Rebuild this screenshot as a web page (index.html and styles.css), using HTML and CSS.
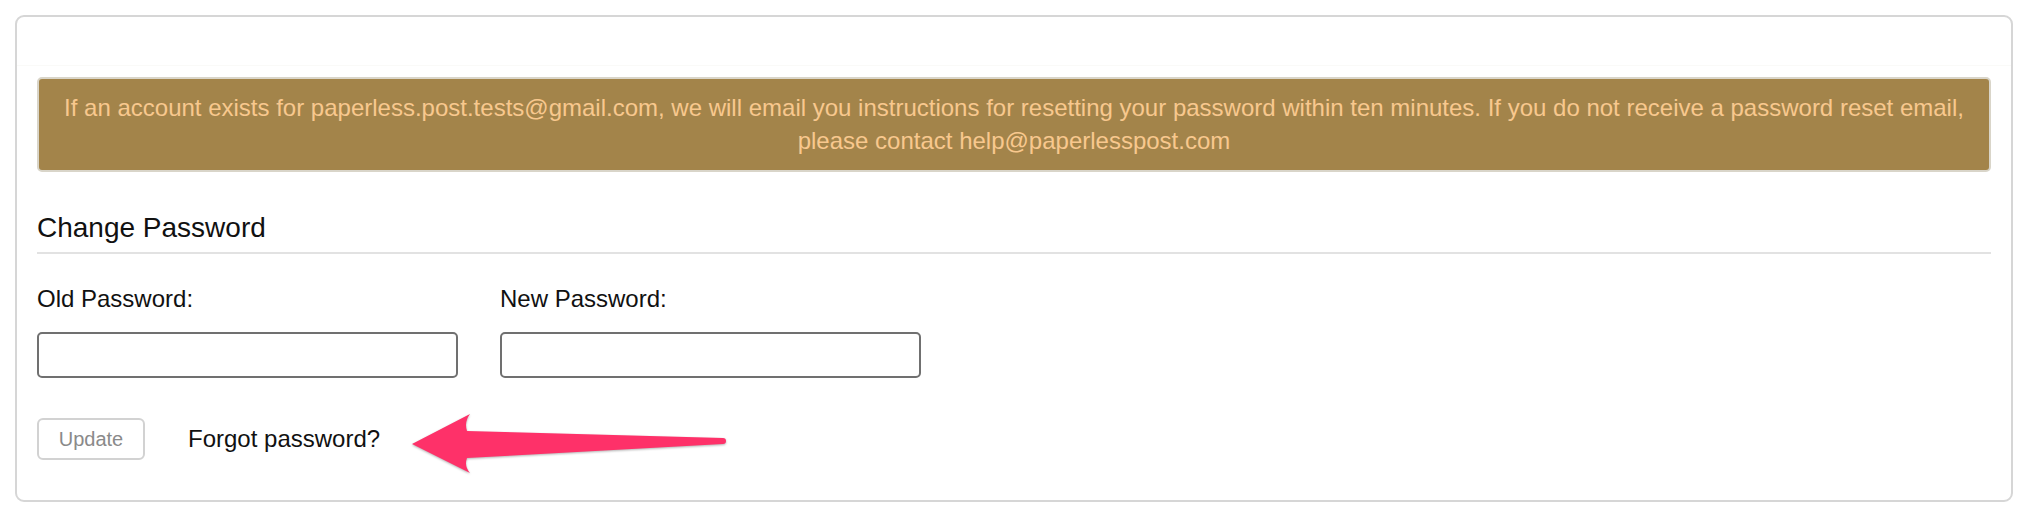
FILE: index.html
```html
<!DOCTYPE html>
<html lang="en">
<head>
  <meta charset="UTF-8">
  <title>Account Settings</title>
  <link rel="stylesheet" href="styles.css">
</head>
<body class="settings-page">
  <div class="card">
    <div class="card-top"></div>

    <div class="notice">
      If an account exists for paperless.post.tests@gmail.com, we will email you instructions for resetting your password within ten minutes. If you do not receive a password reset email, please contact help@paperlesspost.com
    </div>

    <h2 class="section-title">Change Password</h2>

    <div class="fields">
      <div class="field">
        <label for="oldPw">Old Password:</label>
        <input type="password" id="oldPw">
      </div>
      <div class="field">
        <label for="newPw">New Password:</label>
        <input type="password" id="newPw">
      </div>
    </div>

    <div class="actions">
      <button class="update-btn" disabled>Update</button>
      <a href="#" class="forgot-link">Forgot password?</a>
      <!-- annotation arrow -->
      <svg class="arrow" width="330" height="75" viewBox="0 0 330 75">
        <path d="M10 42 L68 12 Q62 20 65 29 L321 36 A3 3 0 0 1 321 42 L65 56 Q62 64 68 71 Z" fill="#fe3169"/>
      </svg>
    </div>
  </div>
</body>
</html>
```

FILE: styles.css
```css
body.settings-page {
  margin: 0;
  padding: 15px;
  background: #ffffff;
  font-family: "Liberation Sans", Arial, Helvetica, sans-serif;
  color: #111111;
}

.card {
  width: 1998px;
  box-sizing: border-box;
  border: 2px solid #d6d6d6;
  border-radius: 9px;
  padding: 0 20px 40px 20px;
}

.card-top {
  height: 48px;
  border-bottom: 1px solid #fafaf8;
  margin: 0 -20px 11px -20px;
}

.notice {
  background: #a3844a;
  color: #f8c88e;
  border: 2px solid #d9d5c9;
  border-radius: 5px;
  padding: 12px 15px 13px 15px;
  font-size: 24px;
  line-height: 33px;
  text-align: center;
}

.section-title {
  font-size: 28px;
  font-weight: normal;
  line-height: 34px;
  margin: 39px 0 0 0;
  padding-bottom: 7px;
  border-bottom: 2px solid #e2e2e2;
}

.fields {
  display: flex;
  gap: 42px;
  margin-top: 31px;
}

.field {
  display: flex;
  flex-direction: column;
  width: 421px;
}

.field label {
  font-size: 24px;
  line-height: 28px;
  margin-bottom: 19px;
}

.field input {
  height: 46px;
  box-sizing: border-box;
  border: 2px solid #707070;
  border-radius: 5px;
  font-size: 20px;
  padding: 0 10px;
}

.actions {
  display: flex;
  align-items: center;
  margin-top: 40px;
}

.update-btn {
  width: 108px;
  height: 42px;
  background: #ffffff;
  border: 2px solid #d2d2d2;
  border-radius: 6px;
  color: #8a8a8a;
  font-family: "Liberation Sans", Arial, sans-serif;
  font-size: 20px;
  padding: 0;
}

.forgot-link {
  margin-left: 43px;
  font-size: 24px;
  color: #111111;
  text-decoration: none;
}

.arrow {
  margin: -17px 0 -17px 22px;
  filter: drop-shadow(0 1px 1px rgba(0, 0, 0, 0.3));
}
```
